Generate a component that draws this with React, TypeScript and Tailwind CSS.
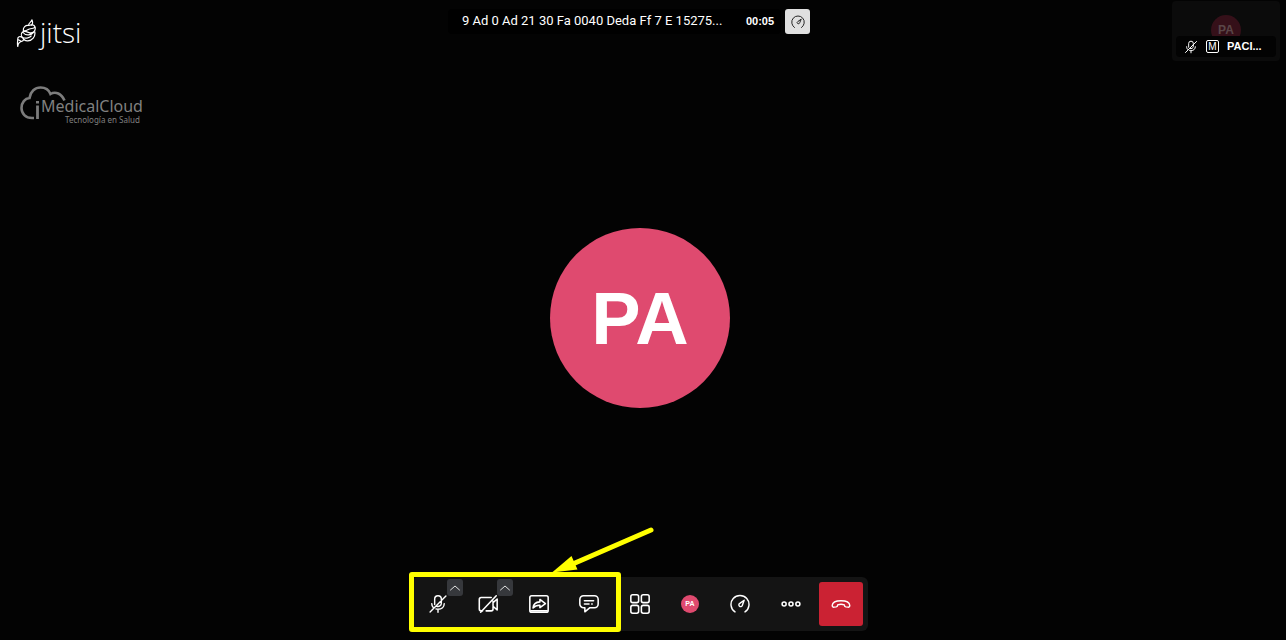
import type { ReactNode } from "react";

const sans = "font-['Liberation_Sans',Arial,sans-serif]";

function Icon({ children, className = "size-[22px]" }: { children: ReactNode; className?: string }) {
  return (
    <svg
      viewBox="0 0 24 24"
      fill="none"
      stroke="currentColor"
      strokeWidth="1.7"
      strokeLinecap="round"
      strokeLinejoin="round"
      className={className}
      aria-hidden="true"
    >
      {children}
    </svg>
  );
}

function MicOff({ className }: { className?: string }) {
  return (
    <Icon className={className}>
      <path d="M8 12.500V6a4 4 0 0 1 8 0v5a4 4 0 0 1-5.500 3.700M4.500 11.500c0 2 .6 3.600 1.800 4.800M19.500 11.500c0 4-3 6.800-7.500 6.800-.9 0-1.700-.1-2.500-.4M12 18.500V22M21.500 2.500l-19 19" />
    </Icon>
  );
}

function Gauge({ className }: { className?: string }) {
  return (
    <Icon className={className}>
      <path d="M6 21.500A10.800 10.800 0 1 1 18 21.500" />
      <path d="M17 7.500l-5.300 3.700a2.100 2.100 0 1 0 3 2.600z" />
    </Icon>
  );
}

function ToolButton({ label, children }: { label: string; children: ReactNode }) {
  return (
    <button type="button" aria-label={label} className="flex h-11 w-11 items-center justify-center rounded-sm text-white">
      {children}
    </button>
  );
}

function WithMenu({ label, children }: { label: string; children: ReactNode }) {
  return (
    <div className="relative">
      {children}
      <button
        type="button"
        aria-label={label}
        className="absolute -top-[3px] -right-[3px] flex h-[17px] w-4 items-center justify-center rounded-[3px] bg-[#36383c] text-white"
      >
        <Icon className="size-3">
          <path d="M3 16l9-8 9 8" />
        </Icon>
      </button>
    </div>
  );
}

function JitsiLogo() {
  return (
    <a href="#" aria-label="jitsi" className="flex items-center gap-1 text-white">
      <svg viewBox="0 0 20 30" className="h-[30px] w-5" fill="none" stroke="currentColor" strokeWidth="1.200" strokeLinejoin="round" aria-hidden="true">
        <path d="M15.800 2.500c.4 2.500-3.300 2.800-3.300 6M15.800 2.500c1 2 1 4.500-.5 6" />
        <path d="M12.500 8.500c-3-.5-5.500 2-5.200 5 2 1 4-.5 6-1.500 2.500-1 4.500.2 5.700-2-.8-2.200-3.500-2.800-6.500-1.500z" />
        <path d="M19 10c1 3.500-1.500 6-5 5.800-2.500-.3-4.500-2.500-7.500-.8-1.500 1.500-1.500 4 0 5.500M6.500 15c3.500 4.500 8.500 3.500 12-.5" />
        <path d="M18.700 14.500c1.200 5-2.700 9.500-7.200 9.300-2.500-.1-4.300-1.500-5-3.300 3.500 1.300 7.500.5 9-1.800" />
        <path d="M6.500 20.500c-2.500-1.800-5-.8-4.800 2 .1 2-.7 4 .1 7 .2-3 1.700-4.500 3.700-5 1.300-.3 2-1.300 2.500-2.300M2 22.500l3.500 2" />
      </svg>
      <span className="font-['Open_Sans',sans-serif] text-[28px] leading-8 font-light">jitsi</span>
    </a>
  );
}

function ClinicLogo() {
  return (
    <svg viewBox="0 0 124 42" className="h-[42px] w-[124px]" role="img" aria-label="iMedicalCloud Tecnología en Salud">
      <path d="M14 33H12C5.500 33 1.500 28.500 1.500 23c0-5.500 3.500-9.500 8-10C10.500 6.500 15 2.500 20.500 2.500c5 0 8.500 2.500 10 6.500 5-3 11-.5 14 6.500" fill="none" stroke="#7c7c7c" strokeWidth="2.600" />
      <path d="M17.500 20.500V34" stroke="#7c7c7c" strokeWidth="2.800" />
      <path d="M16 16h3v2.500h-3z" fill="#7c7c7c" />
      <text x="21" y="27" fill="#808080" className="font-['Noto_Sans',sans-serif] text-[16px]">MedicalCloud</text>
      <text x="45" y="38" fill="#808080" className="font-['Noto_Sans',sans-serif] text-[8px]">Tecnología en Salud</text>
    </svg>
  );
}

export default function App() {
  return (
    <div className={`grid min-h-screen grid-cols-1 bg-[#030303] pr-1.5 text-white ${sans}`}>
      <main className="col-start-1 row-start-1 flex items-center justify-center pb-1">
        <div className="flex size-[180px] items-center justify-center rounded-full bg-[#df4a6f] text-[74px] font-bold">
          PA
        </div>
      </main>

      <header className="z-10 col-start-1 row-start-1 grid grid-cols-[1fr_auto_1fr] items-start self-start">
        <div className="flex flex-col items-start gap-[34px] pt-4 pl-4">
          <JitsiLogo />
          <div className="pt-[3px] pl-1"><ClinicLogo /></div>
        </div>

        <div className="flex items-center gap-1 pt-[9px] pr-[22px]">
          <div className="flex h-[25px] items-center rounded-sm bg-black pr-[7px] pl-3.5">
            <h1 className="w-[284px] pb-0.5 font-['Roboto',sans-serif] text-[13px] leading-5 whitespace-nowrap">9 Ad 0 Ad 21 30 Fa 0040 Deda Ff 7 E 15275...</h1>
            <span className="text-[11px] font-bold">00:05</span>
          </div>
          <button type="button" aria-label="Performance settings" className="flex size-[25px] items-center justify-center rounded-[3px] bg-[#e0e0e0] text-[#222]">
            <Gauge className="size-3.5" />
          </button>
        </div>

        <div className="mt-px flex h-[60px] w-[108px] flex-col justify-end justify-self-end rounded-sm bg-[#0b0b0b] p-1">
          <div className="-mb-[9px] flex size-[30px] items-center justify-center self-center rounded-full bg-[#351019] text-xs font-bold text-[#5a4648]">
            PA
          </div>
          <div className="z-10 flex h-[21px] items-center gap-2 rounded-sm bg-[#030303] pl-2">
            <MicOff className="size-3.5" />
            <span className="flex size-[13px] items-center justify-center rounded-[2px] border border-white text-[10px]">M</span>
            <span className="text-[11px] font-bold">PACI...</span>
          </div>
        </div>
      </header>

      <footer className="z-10 col-start-1 row-start-1 flex justify-center self-end pb-[9px]">
        <div className="relative flex h-[54px] w-[456px] items-center justify-between rounded-md bg-[#141414] pr-[5px] pl-1">
          <WithMenu label="Audio settings">
            <ToolButton label="Unmute microphone"><MicOff className="size-5" /></ToolButton>
          </WithMenu>
          <WithMenu label="Video settings">
            <ToolButton label="Start camera">
              <Icon>
                <path d="M6 19.500H4.500a2 2 0 0 1-2-2V7a2 2 0 0 1 2-2h11M17.500 9v8.500a2 2 0 0 1-2 2H10M17.500 10.500l4.500-4v12l-4.500-4M21 3L4 21" />
              </Icon>
            </ToolButton>
          </WithMenu>
          <ToolButton label="Share screen">
            <Icon>
              <rect x="2" y="3" width="20" height="18" rx="2" />
              <path d="M3 19.500h18M13 7l6 4.700-6 4.300v-2.700c-3.500-.2-5.500.7-7.500 3 .3-4 3-6.300 7.500-6.600z" />
            </Icon>
          </ToolButton>
          <ToolButton label="Open chat">
            <Icon>
              <path d="M6 3h12a4 4 0 0 1 4 4v5a4 4 0 0 1-4 4h-5l-5.500 4.500V16H6a4 4 0 0 1-4-4V7a4 4 0 0 1 4-4zM7 8.500h10M7 12h5M15 12h.5" />
            </Icon>
          </ToolButton>
          <ToolButton label="Toggle tile view">
            <Icon>
              <rect x="2" y="2" width="8.500" height="8.500" rx="2" />
              <rect x="13.500" y="2" width="8.500" height="8.500" rx="2" />
              <rect x="2" y="13.500" width="8.500" height="8.500" rx="2" />
              <rect x="13.500" y="13.500" width="8.500" height="8.500" rx="2" />
            </Icon>
          </ToolButton>
          <ToolButton label="Participants">
            <span className="flex size-[18px] items-center justify-center rounded-full bg-[#df4a6f] text-[7px] font-bold">PA</span>
          </ToolButton>
          <ToolButton label="Performance settings"><Gauge className="size-5" /></ToolButton>
          <ToolButton label="More actions">
            <Icon>
              <circle cx="4.500" cy="12" r="2.200" />
              <circle cx="12" cy="12" r="2.200" />
              <circle cx="19.500" cy="12" r="2.200" />
            </Icon>
          </ToolButton>
          <button type="button" aria-label="Leave the meeting" className="flex h-11 w-11 items-center justify-center rounded-[3px] bg-[#cb2233]">
            <Icon className="size-5">
              <path d="M1.500 13.500C1.800 9.800 6 8 12 8s10.200 1.800 10.500 5.500c.1 1.700-.8 2.500-2.300 2.300l-2.500-.3c-1.300-.2-1.700-1-1.700-2.500-2.500-.8-5.500-.8-8 0 0 1.500-.4 2.300-1.700 2.500l-2.500.3c-1.500.2-2.400-.6-2.300-2.300z" />
            </Icon>
          </button>

          <div className="pointer-events-none absolute -top-[5px] -left-[3px] h-[60px] w-[212px] rounded-[3px] border-[5px] border-[#ffff00]" />
          <svg viewBox="0 0 104 48" className="pointer-events-none absolute -top-[51px] left-[139px] h-12 w-[104px]" aria-hidden="true">
            <path d="M100 4L24 37" stroke="#ffff00" strokeWidth="5" strokeLinecap="round" />
            <path d="M1 46.500L20.500 30l6 13.500z" fill="#ffff00" />
          </svg>
        </div>
      </footer>
    </div>
  );
}
